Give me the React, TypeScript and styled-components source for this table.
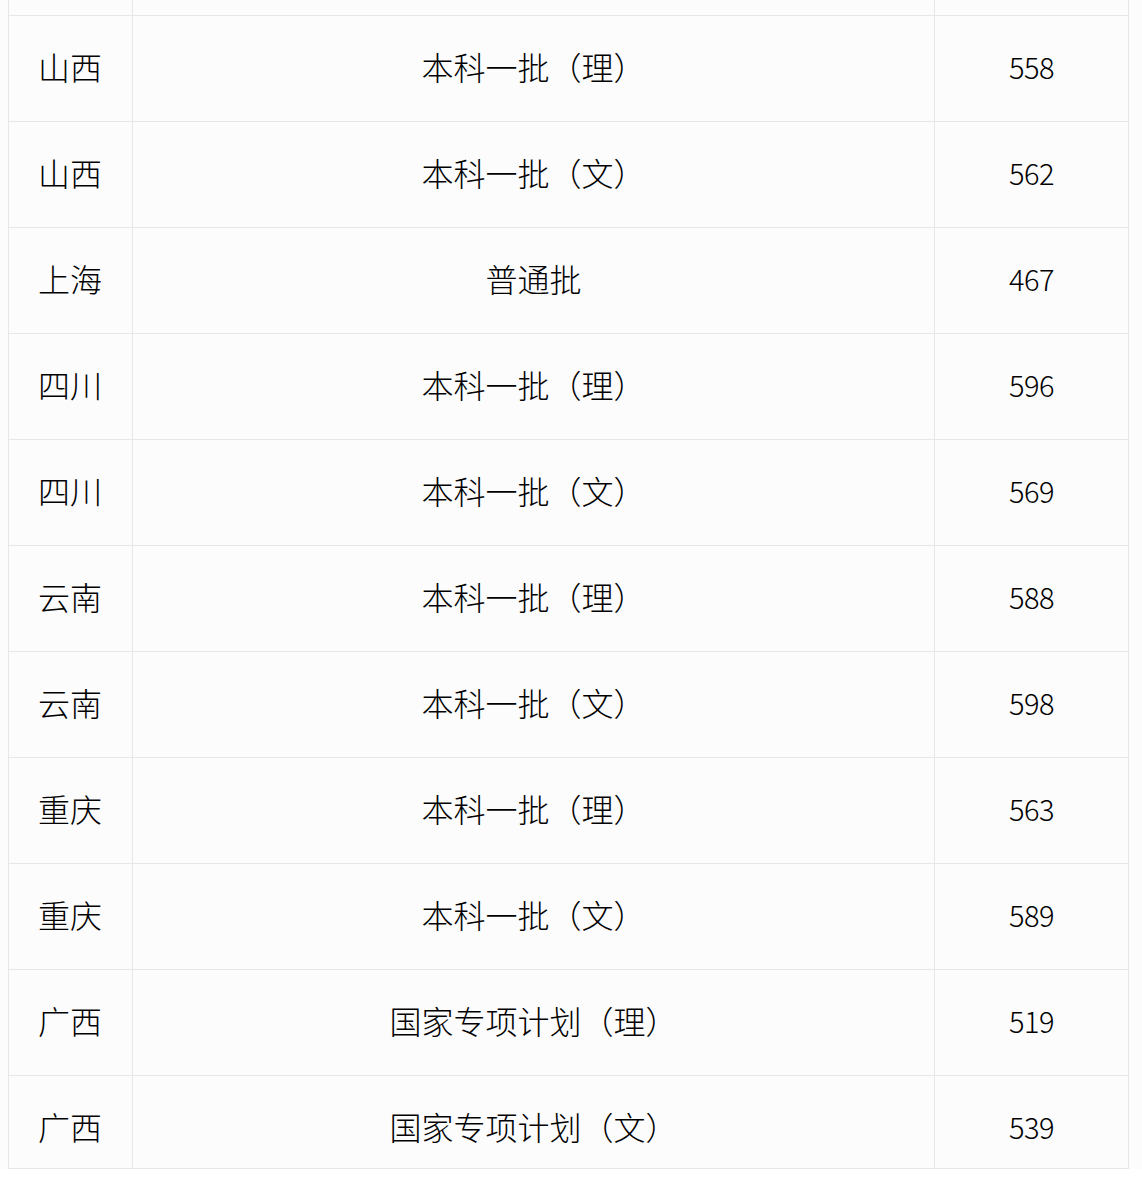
import React from "react";
import styled, { createGlobalStyle } from "styled-components";

const GlobalStyle = createGlobalStyle`
  html, body {
    margin: 0;
    padding: 0;
    background: #ffffff;
  }
  body {
    font-family: "Noto Sans CJK SC", "Noto Sans", sans-serif;
    color: #000000;
  }
`;

const Page = styled.div`
  width: 1142px;
  padding-left: 8px;
  box-sizing: border-box;
  background: #fcfcfd;
`;

const Table = styled.div`
  display: grid;
  grid-template-columns: 123px 801px 193px;
  gap: 1px;
  width: 1121px;
  padding: 0 1px 1px 1px;
  box-sizing: border-box;
  background: #e6e6eb;
`;

// cut-off row at the very top of the screenshot
const Filler = styled.div`
  height: 15px;
  background: #fcfcfd;
`;

const Cell = styled.div<{ $align: "left" | "center"; $height: number; $num?: boolean }>`
  height: ${(p) => p.$height}px;
  box-sizing: border-box;
  padding-top: 34px;
  padding-left: ${(p) => (p.$align === "left" ? "29px" : "0")};
  text-align: ${(p) => p.$align};
  background: #fcfcfd;
  font-size: ${(p) => (p.$num ? "29px" : "32px")};
  font-weight: 300;
  line-height: 32px;
  white-space: nowrap;
  overflow: hidden;
  letter-spacing: ${(p) => (p.$num ? "-0.5px" : "0")};
`;

const rows: [string, string, string][] = [
  ["山西", "本科一批（理）", "558"],
  ["山西", "本科一批（文）", "562"],
  ["上海", "普通批", "467"],
  ["四川", "本科一批（理）", "596"],
  ["四川", "本科一批（文）", "569"],
  ["云南", "本科一批（理）", "588"],
  ["云南", "本科一批（文）", "598"],
  ["重庆", "本科一批（理）", "563"],
  ["重庆", "本科一批（文）", "589"],
  ["广西", "国家专项计划（理）", "519"],
  ["广西", "国家专项计划（文）", "539"],
];

const App = () => {
  return (
    <>
      <GlobalStyle />
      <Page>
        <Table>
          <Filler />
          <Filler />
          <Filler />
          {rows.map(([province, batch, score], i) => {
            const h = i === rows.length - 1 ? 92 : 105;
            return (
              <React.Fragment key={i}>
                <Cell $align="left" $height={h}>{province}</Cell>
                <Cell $align="center" $height={h}>{batch}</Cell>
                <Cell $align="center" $height={h} $num>{score}</Cell>
              </React.Fragment>
            );
          })}
        </Table>
      </Page>
    </>
  );
};

export default App;
